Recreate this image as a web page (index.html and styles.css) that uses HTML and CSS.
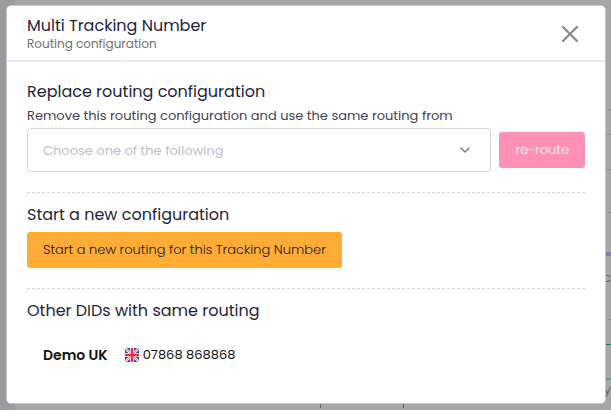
FILE: index.html
```
<!DOCTYPE html>
<html lang="en">
<head>
  <meta charset="UTF-8">
  <title>Multi Tracking Number</title>
  <link rel="stylesheet" href="styles.css">
</head>
<body>

<!-- Page behind the dialog -->
<div class="page">
  <div class="sidebar"></div>
  <div class="content">
    <div class="line dashed top"></div>
    <div class="line"></div>
    <div class="line tall"></div>
    <div class="line dashed big"></div>
    <div class="line blue big"></div>
    <div class="peek">c</div>
    <div class="line dashed"></div>
    <div class="line green"></div>
    <div class="line mint tall"></div>
    <div class="peek">y</div>
    <div class="ticks"><i></i><i></i></div>
  </div>
</div>

<div class="overlay">
  <div class="modal" role="dialog" aria-labelledby="title">
    <header class="modal-header">
      <div>
        <h1 id="title">Multi Tracking Number</h1>
        <p>Routing configuration</p>
      </div>
      <button type="button" class="close" aria-label="Close">
        <svg width="18" height="18" viewBox="0 0 18 18"><path d="M2 2L16 16M16 2L2 16" fill="none" stroke="#8c8c8c" stroke-width="2.4" stroke-linecap="round"/></svg>
      </button>
    </header>

    <div class="modal-body">
      <section>
        <h2>Replace routing configuration</h2>
        <label for="routing">Remove this routing configuration and use the same routing from</label>
        <div class="route-row">
          <div class="select-box">
            <select id="routing">
              <option>Choose one of the following</option>
            </select>
            <svg class="chevron" width="12" height="8" viewBox="0 0 12 8"><path d="M2 2L6 6L10 2" fill="none" stroke="#85858f" stroke-width="1.6" stroke-linecap="round" stroke-linejoin="round"/></svg>
          </div>
          <button type="button" class="btn pink">re-route</button>
        </div>
      </section>

      <section>
        <h2>Start a new configuration</h2>
        <button type="button" class="btn orange">Start a new routing for this Tracking Number</button>
      </section>

      <section>
        <h2>Other DIDs with same routing</h2>
        <div class="did">
          <strong>Demo UK</strong>
          <svg class="flag" width="14" height="14" viewBox="0 0 14 14">
            <clipPath id="round"><rect width="14" height="14" rx="3"/></clipPath>
            <g clip-path="url(#round)">
              <rect width="14" height="14" fill="#29439a"/>
              <path d="M0 0L14 14M14 0L0 14" stroke="#fff" stroke-width="2.4"/>
              <path d="M0 0L14 14M14 0L0 14" stroke="#e4324a" stroke-width="0.7"/>
              <path d="M7 0V14M0 7H14" stroke="#fff" stroke-width="4.2"/>
              <path d="M7 0V14M0 7H14" stroke="#f0283e" stroke-width="2.4"/>
            </g>
          </svg>
          <span>07868 868868</span>
        </div>
      </section>
    </div>
  </div>
</div>

</body>
</html>
```
FILE: styles.css
```
* { box-sizing: border-box; margin: 0; padding: 0; }

body {
  height: 100vh;
  overflow: hidden;
  background: #a7a7a8;
  color: #1f2440;
  font-family: Poppins, Inter, "Liberation Sans", sans-serif;
  font-size: 13px;
}

button, select {
  font: inherit;
  border: 0;
}

/* Dimmed page */
.page {
  display: flex;
  height: 100vh;
}

.sidebar {
  width: 15px;
  background: #9b9aa0;
}

.content {
  flex: 1;
  color: #65656b;
}

.line {
  height: 25px;
  border-bottom: 1px solid #8e8e91;
}

.line.dashed { border-bottom-style: dashed; }
.line.top { height: 110px; }
.line.tall { height: 35px; }
.line.big { height: 43px; }

.line.blue { border-bottom: 4px solid #7882ab; }
.line.green { border-bottom-color: #26795c; }
.line.mint { border-bottom: 2px solid #6a9c88; }

.peek {
  height: 39px;
  line-height: 44px;
  text-align: right;
}

.line.mint + .peek {
  height: 22px;
  line-height: 20px;
}

.ticks {
  display: flex;
  gap: 82px;
  padding-left: 305px;
}

.ticks i {
  width: 1px;
  height: 6px;
  background: #65656b;
}

/* Dialog */
.overlay {
  position: fixed;
  inset: 0;
  display: flex;
  padding: 5px 5px 6px 6px;
}

.modal {
  flex: 1;
  background: #fff;
  border: 1px solid #c8c8c9;
  border-radius: 5px;
}

.modal-header {
  display: flex;
  justify-content: space-between;
  align-items: center;
  padding: 10px 20px 8px;
  border-bottom: 2px solid #ebebeb;
}

h1, h2 {
  font-size: 16px;
  font-weight: 400;
  line-height: 20px;
}

.modal-header p {
  color: #707070;
  font-size: 12px;
  line-height: 16px;
}

.close {
  display: flex;
  padding: 6px;
  background: none;
}

.modal-body {
  padding: 0 20px;
}

section {
  padding: 12px 0 20px;
}

section:first-child {
  padding-top: 20px;
}

section + section {
  border-top: 1px dashed #d5d5d5;
}

label {
  display: block;
  margin: 4px 0 2px;
  color: #3e4258;
  line-height: 20px;
}

.route-row {
  display: flex;
  align-items: center;
  gap: 8px;
}

.select-box {
  position: relative;
  flex: 1;
}

select {
  width: 100%;
  height: 44px;
  padding: 0 15px;
  appearance: none;
  background: #fff;
  border: 1px solid #d8d8da;
  border-radius: 4px;
  color: #c0c0c6;
}

.chevron {
  position: absolute;
  top: 18px;
  right: 20px;
  pointer-events: none;
}

.btn {
  height: 36px;
  padding: 0 16px;
  border-radius: 3px;
  font-size: 13px;
  font-weight: 300;
}

.pink {
  background: #ff92b4;
  color: #fff;
}

.orange {
  display: block;
  margin-top: 7px;
  background: #ffad37;
  color: #1c1508;
}

.did {
  display: flex;
  align-items: center;
  margin-top: 24px;
  padding-left: 16px;
  color: #111;
  line-height: 20px;
}

.did strong {
  font-size: 14px;
  font-weight: 600;
}

.flag {
  margin: 0 4px 0 17px;
}
```
